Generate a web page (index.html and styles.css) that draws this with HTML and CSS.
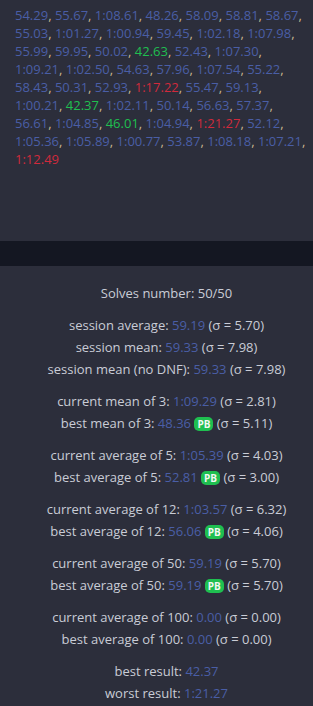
FILE: index.html
```html
<!DOCTYPE html>
<html lang="en">
<head>
  <meta charset="UTF-8" />
  <meta name="viewport" content="width=device-width, initial-scale=1.0" />
  <title>Session stats</title>
  <link rel="stylesheet" href="styles.css">
</head>
<body>
  <div class="times-panel">
    <p class="times">
      <span class="t">54.29</span><span class="c">,</span> <span class="t">55.67</span><span class="c">,</span> <span class="t">1:08.61</span><span class="c">,</span> <span class="t">48.26</span><span class="c">,</span> <span class="t">58.09</span><span class="c">,</span> <span class="t">58.81</span><span class="c">,</span> <span class="t">58.67</span><span class="c">,</span>
      <span class="t">55.03</span><span class="c">,</span> <span class="t">1:01.27</span><span class="c">,</span> <span class="t">1:00.94</span><span class="c">,</span> <span class="t">59.45</span><span class="c">,</span> <span class="t">1:02.18</span><span class="c">,</span> <span class="t">1:07.98</span><span class="c">,</span>
      <span class="t">55.99</span><span class="c">,</span> <span class="t">59.95</span><span class="c">,</span> <span class="t">50.02</span><span class="c">,</span> <span class="t best">42.63</span><span class="c">,</span> <span class="t">52.43</span><span class="c">,</span> <span class="t">1:07.30</span><span class="c">,</span>
      <span class="t">1:09.21</span><span class="c">,</span> <span class="t">1:02.50</span><span class="c">,</span> <span class="t">54.63</span><span class="c">,</span> <span class="t">57.96</span><span class="c">,</span> <span class="t">1:07.54</span><span class="c">,</span> <span class="t">55.22</span><span class="c">,</span>
      <span class="t">58.43</span><span class="c">,</span> <span class="t">50.31</span><span class="c">,</span> <span class="t">52.93</span><span class="c">,</span> <span class="t worst">1:17.22</span><span class="c">,</span> <span class="t">55.47</span><span class="c">,</span> <span class="t">59.13</span><span class="c">,</span>
      <span class="t">1:00.21</span><span class="c">,</span> <span class="t best">42.37</span><span class="c">,</span> <span class="t">1:02.11</span><span class="c">,</span> <span class="t">50.14</span><span class="c">,</span> <span class="t">56.63</span><span class="c">,</span> <span class="t">57.37</span><span class="c">,</span>
      <span class="t">56.61</span><span class="c">,</span> <span class="t">1:04.85</span><span class="c">,</span> <span class="t best">46.01</span><span class="c">,</span> <span class="t">1:04.94</span><span class="c">,</span> <span class="t worst">1:21.27</span><span class="c">,</span> <span class="t">52.12</span><span class="c">,</span>
      <span class="t">1:05.36</span><span class="c">,</span> <span class="t">1:05.89</span><span class="c">,</span> <span class="t">1:00.77</span><span class="c">,</span> <span class="t">53.87</span><span class="c">,</span> <span class="t">1:08.18</span><span class="c">,</span> <span class="t">1:07.21</span><span class="c">,</span>
      <span class="t worst">1:12.49</span>
    </p>
  </div>

  <div class="divider"></div>

  <div class="stats-panel">
    <div class="group">
      <p>Solves number: 50/50</p>
    </div>

    <div class="group">
      <p>session average: <span class="v">59.19</span> (σ = 5.70)</p>
      <p>session mean: <span class="v">59.33</span> (σ = 7.98)</p>
      <p>session mean (no DNF): <span class="v">59.33</span> (σ = 7.98)</p>
    </div>

    <div class="group">
      <p>current mean of 3: <span class="v">1:09.29</span> (σ = 2.81)</p>
      <p>best mean of 3: <span class="v">48.36</span> <span class="pb">PB</span> (σ = 5.11)</p>
    </div>

    <div class="group">
      <p>current average of 5: <span class="v">1:05.39</span> (σ = 4.03)</p>
      <p>best average of 5: <span class="v">52.81</span> <span class="pb">PB</span> (σ = 3.00)</p>
    </div>

    <div class="group">
      <p>current average of 12: <span class="v">1:03.57</span> (σ = 6.32)</p>
      <p>best average of 12: <span class="v">56.06</span> <span class="pb">PB</span> (σ = 4.06)</p>
    </div>

    <div class="group">
      <p>current average of 50: <span class="v">59.19</span> (σ = 5.70)</p>
      <p>best average of 50: <span class="v">59.19</span> <span class="pb">PB</span> (σ = 5.70)</p>
    </div>

    <div class="group">
      <p>current average of 100: <span class="v">0.00</span> (σ = 0.00)</p>
      <p>best average of 100: <span class="v">0.00</span> (σ = 0.00)</p>
    </div>

    <div class="group">
      <p>best result: <span class="v">42.37</span></p>
      <p>worst result: <span class="v">1:21.27</span></p>
    </div>
  </div>
</body>
</html>
```

FILE: styles.css
```css
body {
  font-family: 'Open Sans', sans-serif;
  margin: 0;
  padding: 0;
  background: #2c2e3b;
  color: #c9ccd6;
  font-size: 13px;
}

p {
  margin: 0;
}

.times-panel {
  height: 241px;
  padding: 6px 3px 0 15px;
  box-sizing: border-box;
  background: #2c2e3b;
}

.times {
  line-height: 18px;
}

.t {
  color: #4a5ea6;
}

.t.best {
  color: #1fbf50;
}

.t.worst {
  color: #d02a3c;
}

.c {
  color: #c9b68f;
}

.divider {
  height: 25px;
  background: #141722;
}

.stats-panel {
  padding: 16px 0 10px 20px;
  text-align: center;
}

.group {
  margin-bottom: 10px;
}

.group p {
  line-height: 22px;
}

.v {
  color: #4a5ea6;
}

.pb {
  display: inline-block;
  background: #1fbf50;
  color: #f4f7f4;
  font-size: 10px;
  font-weight: 700;
  line-height: 14px;
  padding: 0 3px;
  border-radius: 5px;
  vertical-align: 0;
}
```
